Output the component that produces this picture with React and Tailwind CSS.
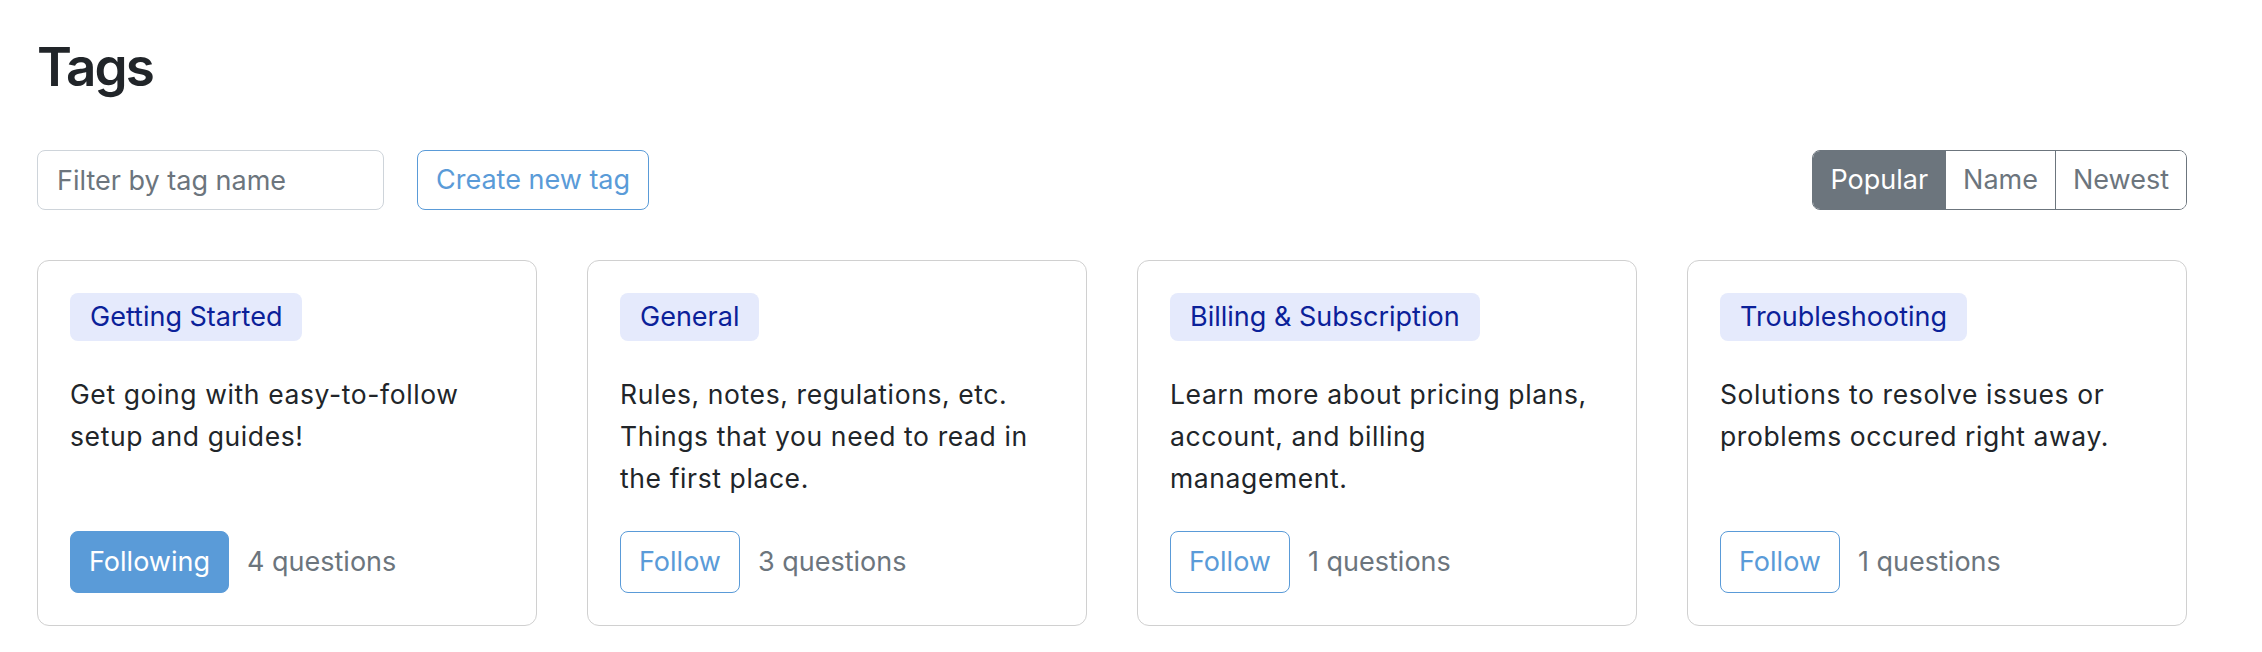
import { useState } from 'react';

const TAGS = [
  {
    name: 'Getting Started',
    description: 'Get going with easy-to-follow setup and guides!',
    following: true,
    count: 4,
  },
  {
    name: 'General',
    description: 'Rules, notes, regulations, etc. Things that you need to read in the first place.',
    following: false,
    count: 3,
  },
  {
    name: 'Billing & Subscription',
    description: 'Learn more about pricing plans, account, and billing management.',
    following: false,
    count: 1,
  },
  {
    name: 'Troubleshooting',
    description: 'Solutions to resolve issues or problems occured right away.',
    following: false,
    count: 1,
  },
];

const SORTS = ['Popular', 'Name', 'Newest'];

export default function App() {
  const [sort, setSort] = useState('Popular');
  const [query, setQuery] = useState('');

  return (
    <div className="min-h-screen bg-white pl-[37px] pr-[75px] pt-[40px] pb-[26px] font-['Inter',sans-serif] text-[#212529]">
      <h1 className="text-[53px] leading-[54px] font-semibold tracking-[-2px]">Tags</h1>

      {/* Toolbar */}
      <div className="mt-[56px] flex items-center justify-between">
        <div className="flex items-center gap-[33px]">
          <input
            value={query}
            onChange={(e) => setQuery(e.target.value)}
            placeholder="Filter by tag name"
            className="w-[347px] h-[60px] px-[19px] rounded-[8px] border border-[#ced4da] text-[27px] text-[#212529] placeholder:text-[#6c757d] outline-none"
          />
          <button className="h-[60px] px-[18px] rounded-[8px] border border-[#5a9bd8] text-[27px] text-[#5a9bd8] bg-white">
            Create new tag
          </button>
        </div>

        <div className="flex h-[60px] rounded-[8px] border border-[#6c757d] overflow-hidden">
          {SORTS.map((s, i) => (
            <button
              key={s}
              onClick={() => setSort(s)}
              className={
                'px-[17px] text-[27px] ' +
                (i > 0 ? 'border-l border-[#6c757d] ' : '') +
                (sort === s ? 'bg-[#6c757d] text-white' : 'bg-white text-[#6c757d]')
              }
            >
              {s}
            </button>
          ))}
        </div>
      </div>

      {/* Cards */}
      <div className="mt-[50px] grid grid-cols-4 gap-[50px]">
        {TAGS.map((tag) => (
          <div
            key={tag.name}
            className="flex flex-col gap-[32px] p-[32px] rounded-[12px] border border-[#d0d0d0] bg-white"
          >
            <span className="self-start h-[48px] px-[20px] flex items-center rounded-[8px] bg-[#e5eafc] text-[#0b2199] text-[27px]">
              {tag.name}
            </span>
            <p className="text-[26.5px] leading-[42px] tracking-[0.6px]">{tag.description}</p>
            <div className="mt-auto flex items-center gap-[18px]">
              {tag.following ? (
                <button className="h-[62px] px-[18px] rounded-[8px] bg-[#5a9bd8] border border-[#5a9bd8] text-white text-[27px]">
                  Following
                </button>
              ) : (
                <button className="h-[62px] px-[18px] rounded-[8px] bg-white border border-[#5a9bd8] text-[#5a9bd8] text-[27px]">
                  Follow
                </button>
              )}
              <span className="text-[27px] text-[#6c757d]">{tag.count} questions</span>
            </div>
          </div>
        ))}
      </div>
    </div>
  );
}
